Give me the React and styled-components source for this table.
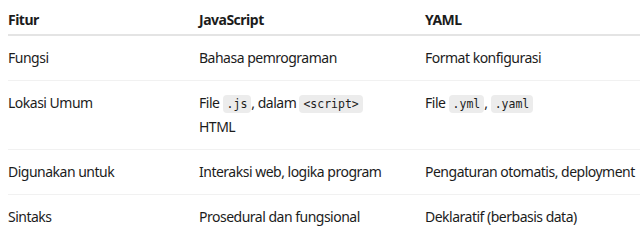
import React from "react";
import styled, { createGlobalStyle } from "styled-components";

const Global = createGlobalStyle`
  html, body { margin: 0; padding: 0; background: #ffffff; overflow: hidden; }
  body { font-family: "Noto Sans", "Open Sans", sans-serif; color: #1c1c1c; }
`;

const Wrap = styled.div`
  padding: 0 0 0 8px;
`;

const Table = styled.table`
  width: 632px;
  table-layout: fixed;
  border-collapse: collapse;
  font-size: 14px;
  line-height: 1.72;
  letter-spacing: -0.5px;
`;

const Col = styled.col`
  width: ${(p) => p.$w}px;
`;

const Th = styled.th`
  text-align: left;
  font-weight: 700;
  padding: 7.5px 16px 2px 0;
  border-bottom: 2px solid #e4e4e4;
  vertical-align: top;
  &:last-child { padding-right: 0; }
`;

const Row = styled.tr`
  & + & td { border-top: 1px solid #f1f1f1; }
`;

const Td = styled.td`
  padding: 10px 30px 10px 0;
  vertical-align: top;
  font-weight: 400;
  &:last-child { padding-right: 0; }
`;

const Code = styled.code`
  font-family: "DejaVu Sans Mono", "Liberation Mono", monospace;
  font-size: 11.5px;
  letter-spacing: 0;
  background: #ececec;
  border-radius: 4px;
  padding: 2px 4px;
  color: #1c1c1c;
`;

const rows = [
  ["Fungsi", "Bahasa pemrograman", "Format konfigurasi"],
  [
    "Lokasi Umum",
    <>File <Code>.js</Code>, dalam <Code>&lt;script&gt;</Code> HTML</>,
    <>File <Code>.yml</Code>, <Code>.yaml</Code></>,
  ],
  ["Digunakan untuk", "Interaksi web, logika program", "Pengaturan otomatis, deployment"],
  ["Sintaks", "Prosedural dan fungsional", "Deklaratif (berbasis data)"],
];

export default function App() {
  return (
    <Wrap>
      <Global />
      <Table>
        <colgroup>
          <Col $w={191} />
          <Col $w={226} />
          <Col $w={215} />
        </colgroup>
        <thead>
          <tr>
            <Th>Fitur</Th>
            <Th>JavaScript</Th>
            <Th>YAML</Th>
          </tr>
        </thead>
        <tbody>
          {rows.map((r, i) => (
            <Row key={i}>
              <Td>{r[0]}</Td>
              <Td>{r[1]}</Td>
              <Td>{r[2]}</Td>
            </Row>
          ))}
        </tbody>
      </Table>
    </Wrap>
  );
}
